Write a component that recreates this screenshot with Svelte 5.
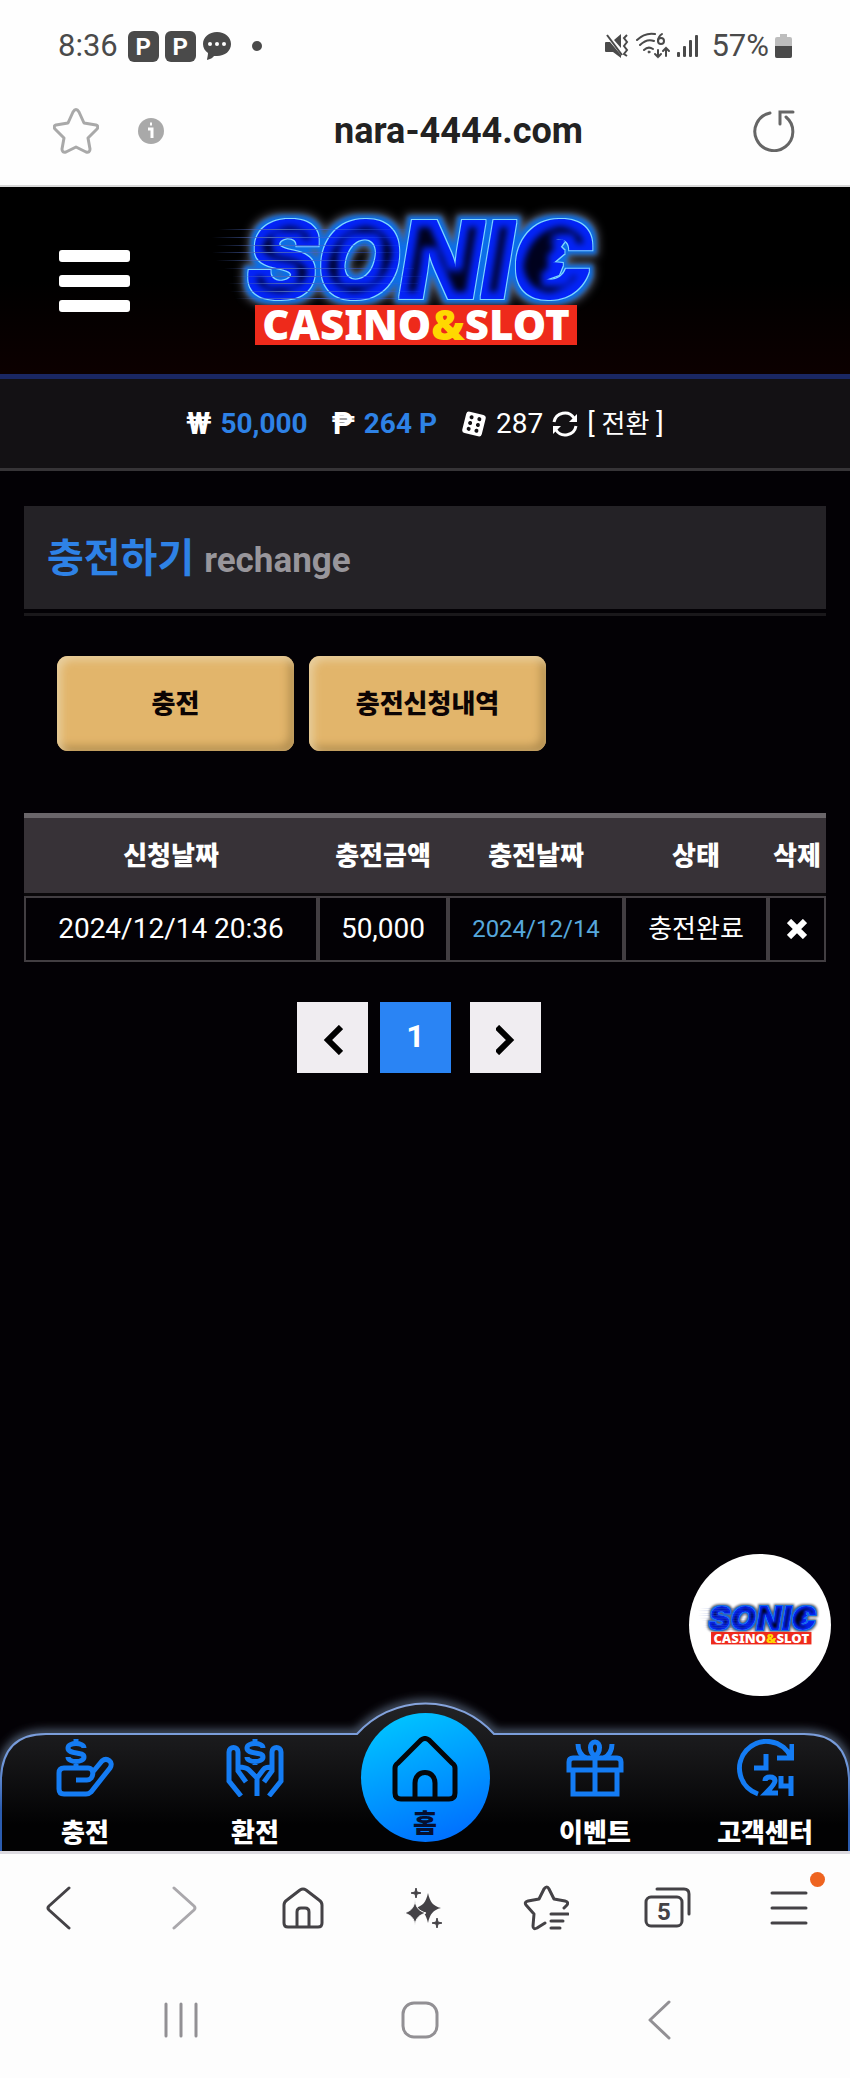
<script lang="ts">
  interface HistoryRow {
    requested: string;
    amount: string;
    charged: string;
    status: string;
  }

  let tab = $state('charge');
  let page = $state(1);
  let rows = $state<HistoryRow[]>([
    { requested: '2024/12/14 20:36', amount: '50,000', charged: '2024/12/14', status: '충전완료' }
  ]);

  const columns = ['신청날짜', '충전금액', '충전날짜', '상태', '삭제'];
  const speedLines = [
    [9, 30], [2, 38], [6, 46], [2, 53], [6, 61], [14, 69], [22, 77], [18, 84], [20, 92], [25, 99]
  ];

  function removeRow(index: number): void {
    rows.splice(index, 1);
  }

  function prevPage(): void {
    if (page > 1) page--;
  }
</script>

{#snippet logo(id: string)}
  <svg class="logo" viewBox="0 10 404 146" role="img" aria-label="SONIC CASINO&SLOT">
    <defs>
      <!-- grey halo, blue glow, bright body, dark core and a thin light edge -->
      <filter id="{id}-neon" x="-20%" y="-40%" width="140%" height="180%" color-interpolation-filters="sRGB">
        <feMorphology in="SourceAlpha" operator="dilate" radius="1" result="shape" />
        <feMorphology in="shape" operator="dilate" radius="6" result="wide" />
        <feGaussianBlur in="wide" stdDeviation="4" result="wideBlur" />
        <feFlood flood-color="#5c606e" />
        <feComposite in2="wideBlur" operator="in" result="halo" />
        <feMorphology in="shape" operator="dilate" radius="4" result="mid" />
        <feGaussianBlur in="mid" stdDeviation="2" result="midBlur" />
        <feFlood flood-color="#0b6ee8" />
        <feComposite in2="midBlur" operator="in" result="glow" />
        <feMorphology in="shape" operator="dilate" radius="1" result="outer" />
        <feFlood flood-color="#7fd6ff" />
        <feComposite in2="outer" operator="in" result="edge" />
        <feFlood flood-color="#0424f8" />
        <feComposite in2="shape" operator="in" result="body" />
        <feMorphology in="shape" operator="erode" radius="7" result="small" />
        <feGaussianBlur in="small" stdDeviation="3" result="smallBlur" />
        <feFlood flood-color="#00021e" />
        <feComposite in2="smallBlur" operator="in" result="core" />
        <feMerge>
          <feMergeNode in="halo" />
          <feMergeNode in="glow" />
          <feMergeNode in="edge" />
          <feMergeNode in="body" />
          <feMergeNode in="core" />
        </feMerge>
      </filter>
      <linearGradient id="{id}-line">
        <stop offset="0" stop-color="#4a66b8" stop-opacity="0" />
        <stop offset="0.3" stop-color="#4a66b8" />
        <stop offset="1" stop-color="#2a5cff" stop-opacity="0.1" />
      </linearGradient>
    </defs>
    <g filter="url(#{id}-neon)">
      <text x="37" y="99" class="word">SONIC</text>
      <path d="M324 44l30-3-5 7 5 5-13 11 11 1-4 10-22 8z" />
    </g>
    {#each speedLines as [x, y]}
      <rect {x} {y} width="190" height="1" fill="url(#{id}-line)" />
    {/each}
    <rect x="45" y="106" width="322" height="40" fill="#ee2a1b" />
    <text x="206" y="141" class="sub">CASINO<tspan class="amp">&amp;</tspan>SLOT</text>
  </svg>
{/snippet}

<div class="screen">
  <header class="phone-top">
    <div class="status">
      <span class="clock">8:36</span>
      <span class="app-badge">P</span>
      <span class="app-badge">P</span>
      <svg class="chat" viewBox="0 0 30 30" width="30" height="30">
        <path d="M15 1C7 1 1 6 1 13c0 4 2 7 5 9 0 3-1 5-1 7 3-1 6-2 7-4h3c8 0 14-5 14-12S23 1 15 1z" fill="#4a4a4a" />
        <circle cx="8" cy="13" r="2" fill="#fff" /><circle cx="15" cy="13" r="2" fill="#fff" /><circle cx="22" cy="13" r="2" fill="#fff" />
      </svg>
      <span class="more-dot"></span>

      <span class="spacer"></span>

      <svg viewBox="0 0 25 26" width="25" height="26" fill="none" stroke="#4a4a4a" stroke-width="2">
        <path d="M1 10q0-1 1-1h4l11 13v3l-8-6H2q-1 0-1-1zM10 7l7-6v14z" fill="#4a4a4a" stroke="none" />
        <path d="M3 2l15 20" />
        <path d="M23 2l-3 3 3 4-3 4 3 4-3 4 3 2" />
      </svg>
      <svg viewBox="0 0 36 28" width="36" height="28" fill="none" stroke="#4a4a4a" stroke-width="2" stroke-linecap="round">
        <path d="M2 8c6-6 12-7 18-6M5 13c5-5 9-6 14-4M9 18c3-3 6-3 9-1" />
        <circle cx="14" cy="20" r="1" fill="#4a4a4a" stroke-width="1" />
        <path d="M27 2c-3 2-4 5-4 7" /><circle cx="26" cy="9" r="3" />
        <path d="M23 18v7M20 22l3 3 3-3M31 24v-8M28 19l3-3 3 3" />
      </svg>
      <svg class="signal" viewBox="0 0 22 24" width="22" height="24" fill="#4a4a4a">
        <rect x="0" y="18" width="3" height="5" rx="1" /><rect x="6" y="12" width="3" height="11" rx="1" />
        <rect x="12" y="6" width="3" height="17" rx="1" /><rect x="18" y="1" width="3" height="22" rx="1" />
      </svg>
      <span class="clock">57%</span>
      <svg class="battery" viewBox="0 0 17 24" width="17" height="24">
        <path d="M5 0h7v3h3a2 2 0 0 1 2 2v17a2 2 0 0 1-2 2H2a2 2 0 0 1-2-2V5a2 2 0 0 1 2-2h3z" fill="#bdbdbd" />
        <path d="M0 12h17v10a2 2 0 0 1-2 2H2a2 2 0 0 1-2-2z" fill="#4a4a4a" />
      </svg>
    </div>

    <div class="address">
      <button class="plain" aria-label="즐겨찾기">
        <svg viewBox="0 0 46 46" width="46" height="46" fill="none" stroke="#a9a9a9" stroke-width="3" stroke-linejoin="round">
          <path d="M20 4q3-5 6 0l5 11 12 2q3 1 1 4l-9 9 2 11q0 4-4 3l-10-5-10 5q-4 1-4-3l2-11-9-9q-2-3 1-4l12-2z" />
        </svg>
      </button>
      <button class="plain info" aria-label="사이트 정보">
        <svg viewBox="0 0 26 26" width="26" height="26">
          <circle cx="13" cy="13" r="13" fill="#a9a9a9" />
          <path d="M10 11h4v9M12 6h2" fill="none" stroke="#fff" stroke-width="3" />
        </svg>
      </button>
      <span class="url">nara-4444.com</span>
      <button class="plain" aria-label="새로고침">
        <svg viewBox="0 0 42 42" width="42" height="42" fill="none" stroke="#666" stroke-width="3" stroke-linecap="round">
          <path d="M17 3A19 19 0 1 0 33 7M27 14V2h13" />
        </svg>
      </button>
    </div>
  </header>

  <div class="site-head">
    <button class="burger" aria-label="메뉴"><span></span><span></span><span></span></button>
    <a class="brand" href="#home">{@render logo('head')}</a>
  </div>

  <div class="balance">
    <span class="pair"><b>₩</b><strong>50,000</strong></span>
    <span class="pair"><b>₱</b><strong>264 P</strong></span>
    <span class="pair">
      <svg viewBox="0 0 26 26" width="26" height="26">
        <g transform="rotate(14 13 13)">
          <rect x="3" y="2" width="20" height="22" rx="3" fill="#fff" />
          <g fill="#131114">
            <circle cx="9" cy="7" r="2" /><circle cx="17" cy="7" r="2" />
            <circle cx="9" cy="13" r="2" /><circle cx="17" cy="13" r="2" />
            <circle cx="9" cy="19" r="2" /><circle cx="17" cy="19" r="2" />
          </g>
        </g>
      </svg>
      <span>287</span>
      <svg viewBox="0 0 26 26" width="26" height="26" fill="none" stroke="#fff" stroke-width="3">
        <path d="M2 11A11 11 0 0 1 22 7M24 15A11 11 0 0 1 4 19" />
        <path d="M25 3v8h-8zM1 23v-8h8z" fill="#fff" stroke="none" />
      </svg>
      <button class="convert">[ <span class="ko">전환</span> ]</button>
    </span>
  </div>

  <main>
    <h1><span>충전하기</span><small>rechange</small></h1>

    <div class="tabs">
      <button class:active={tab === 'charge'} onclick={() => (tab = 'charge')}>충전</button>
      <button class:active={tab === 'history'} onclick={() => (tab = 'history')}>충전신청내역</button>
    </div>

    <table>
      <thead>
        <tr>
          {#each columns as column}
            <th>{column}</th>
          {/each}
        </tr>
      </thead>
      <tbody>
        {#each rows as row, i}
          <tr>
            <td>{row.requested}</td>
            <td>{row.amount}</td>
            <td class="charged">{row.charged}</td>
            <td class="ko">{row.status}</td>
            <td>
              <button class="plain remove" aria-label="삭제" onclick={() => removeRow(i)}>
                <svg viewBox="0 0 20 20" width="20" height="20" stroke="#fff" stroke-width="6">
                  <path d="M2 2l16 16M18 2L2 18" />
                </svg>
              </button>
            </td>
          </tr>
        {/each}
      </tbody>
    </table>

    <nav class="pager" aria-label="페이지">
      <button aria-label="이전" onclick={prevPage}>
        <svg viewBox="0 0 20 30" width="20" height="30" fill="none" stroke="#000" stroke-width="6"><path d="M18 2L5 15l13 13" /></svg>
      </button>
      <button class="current">{page}</button>
      <button class="next" aria-label="다음">
        <svg viewBox="0 0 20 30" width="20" height="30" fill="none" stroke="#000" stroke-width="6"><path d="M1 2l13 13L1 28" /></svg>
      </button>
    </nav>
  </main>

  <div class="dock">
    <a class="float" href="#chat">{@render logo('float')}</a>

    <svg class="dock-bg" viewBox="0 0 850 166" preserveAspectRatio="none" aria-hidden="true">
      <defs>
        <linearGradient id="dock-fill" x1="0" y1="0" x2="0" y2="1">
          <stop offset="0" stop-color="#222326" />
          <stop offset="0.3" stop-color="#18181a" />
          <stop offset="0.8" stop-color="#020203" />
        </linearGradient>
        <linearGradient id="dock-edge" x1="0" y1="0" x2="0" y2="1">
          <stop offset="0" stop-color="#86a4dc" />
          <stop offset="0.4" stop-color="#6f97da" />
          <stop offset="0.7" stop-color="#2b5cb0" />
        </linearGradient>
        <filter id="dock-glow" x="-5%" y="-20%" width="110%" height="140%">
          <feGaussianBlur stdDeviation="5" />
        </filter>
      </defs>
      <path d="M1 170V93Q3 49 46 49H357A92 92 0 0 1 494 49H804Q847 49 849 93V170" fill="none" stroke="#5f7087" stroke-width="7" filter="url(#dock-glow)" />
      <path d="M1 170V93Q3 49 46 49H357A92 92 0 0 1 494 49H804Q847 49 849 93V170" fill="url(#dock-fill)" stroke="url(#dock-edge)" stroke-width="2" />
    </svg>

    <nav class="dock-items">
      <a href="#charge">
        <svg viewBox="0 0 58 58" width="58" height="58" fill="none" stroke="#147cf4" stroke-width="5">
          <path d="M28 9c0-6-16-6-16 0 0 7 16 3 16 9 0 6-16 6-16 0M20 0v5M20 22v6" />
          <path d="M20 41h11c7 0 8-12 1-12H8q-5 0-5 5v16q0 5 5 5h22q3 0 5-2l19-24c4-6-3-11-8-7L36 34" />
        </svg>
        <span>충전</span>
      </a>
      <a href="#exchange">
        <svg viewBox="0 0 58 58" width="58" height="58" fill="none" stroke="#147cf4" stroke-width="5">
          <path d="M37 9c0-6-16-6-16 0 0 7 16 3 16 9 0 6-16 6-16 0M29 0v5M29 21v5" />
          <path d="M15 57L3 42V13c0-6 9-6 9 0v19l8 11M12 28c4 0 8 0 11 3l8 8v18M31 39l6-8c2-3 5-3 9-3M43 57l12-15V13c0-6-9-6-9 0v19l-8 11" />
        </svg>
        <span>환전</span>
      </a>
      <a class="home" href="#home">
        <svg viewBox="0 0 66 66" width="66" height="66" fill="none" stroke="#04060a" stroke-width="5" stroke-linejoin="round">
          <path d="M23 63V47c0-14 20-14 20 0v16M9 63h48q6 0 6-6V32q0-3-3-5L37 4q-4-3-8 0L6 27q-3 2-3 5v25q0 6 6 6z" />
        </svg>
        <span>홈</span>
      </a>
      <a href="#event">
        <svg viewBox="0 0 58 58" width="58" height="58" fill="none" stroke="#147cf4" stroke-width="5">
          <path d="M3 31V23q0-4 4-4h44q4 0 4 4v8zM7 32v23h44V32M29 19v37" />
          <path d="M29 17c-6-4-6-14 0-14s6 10 0 14zM12 5q0 10 8 14M46 5q0 10-8 14" />
        </svg>
        <span>이벤트</span>
      </a>
      <a href="#support">
        <svg viewBox="0 0 58 58" width="58" height="58" fill="none" stroke="#147cf4" stroke-width="5">
          <path d="M22 55A27 27 0 1 1 55 18M56 5v14H41M30 15v14H18" />
          <path d="M29 42q0-4 5-4 5 0 5 4 0 3-9 12h12M45 37v10h9M55 37v20" />
        </svg>
        <span>고객센터</span>
      </a>
    </nav>
  </div>

  <footer>
    <nav class="browser-bar">
      <button class="plain" aria-label="뒤로">
        <svg viewBox="0 0 44 44" width="44" height="44" class="stroke"><path d="M30 2L10 20q-2 2 0 4l20 18" /></svg>
      </button>
      <button class="plain" aria-label="앞으로" disabled>
        <svg viewBox="0 0 44 44" width="44" height="44" class="stroke faded"><path d="M14 2l20 18q2 2 0 4L14 42" /></svg>
      </button>
      <button class="plain" aria-label="홈">
        <svg viewBox="0 0 44 44" width="44" height="44" class="stroke"><path d="M15 40V26q0-4 4-4h4q4 0 4 4v14M6 41h30q4 0 4-4V19q0-3-3-5L24 4q-3-2-6 0L5 14q-3 2-3 5v18q0 4 4 4z" /></svg>
      </button>
      <button class="plain" aria-label="AI">
        <svg viewBox="0 0 44 44" width="44" height="44" fill="#444246">
          <path d="M25 7c2 9 5 13 13 15-8 2-11 6-13 15-2-9-5-13-13-15 8-2 11-6 13-15z" />
          <path d="M12 14c1 8 4 11 11 13-7 2-10 5-11 12-1-7-4-10-11-12 7-2 10-5 11-13z" stroke="#fdfdfd" stroke-width="1" />
          <path d="M13 2l1 4 4 1-4 1-1 4-1-4-4-1 4-1zM34 32l1 4 4 1-4 1-1 4-1-4-4-1 4-1z" stroke="#444246" />
        </svg>
      </button>
      <button class="plain" aria-label="북마크">
        <svg viewBox="0 0 46 46" width="46" height="46" class="stroke">
          <path d="M41 23l3-3q2-3-2-4l-11-2-5-10q-2-4-5 0l-5 10-11 2q-4 1-2 4l8 9-1 12q0 4 4 2l8-5M28 29h17M28 36h12M28 43h9" />
        </svg>
      </button>
      <button class="plain tab-count" aria-label="탭 5">
        <svg viewBox="0 0 48 44" width="48" height="44" class="stroke">
          <rect x="2" y="11" width="36" height="29" rx="5" />
          <path d="M13 3h27q5 0 5 5v20" />
        </svg>
        <span>5</span>
      </button>
      <button class="plain tools" aria-label="도구">
        <svg viewBox="0 0 38 36" width="38" height="36" class="stroke"><path d="M2 3h34M2 18h34M2 33h34" /></svg>
        <span class="notice"></span>
      </button>
    </nav>
    <nav class="system-bar">
      <button class="plain" aria-label="최근 앱">
        <svg viewBox="0 0 36 38" width="36" height="38" class="stroke grey"><path d="M3 3v32M18 3v32M33 3v32" /></svg>
      </button>
      <button class="plain" aria-label="홈 화면">
        <svg viewBox="0 0 38 38" width="38" height="38" class="stroke grey"><rect x="2" y="2" width="34" height="34" rx="11" /></svg>
      </button>
      <button class="plain" aria-label="이전 화면">
        <svg viewBox="0 0 24 40" width="24" height="40" class="stroke grey"><path d="M22 2L3 20l19 18" /></svg>
      </button>
    </nav>
  </footer>
</div>

<style>
  :global(body) {
    margin: 0;
    background: #000;
  }

  .screen {
    min-height: 100vh;
    display: flex;
    flex-direction: column;
    background: #030105;
    color: #fff;
    font-family: Roboto, "Noto Sans CJK KR", sans-serif;
    font-size: 28px;
    line-height: 36px;
  }

  svg {
    display: block;
    flex: none;
  }

  button {
    margin: 0;
    padding: 0;
    border: 0;
    font: inherit;
    color: inherit;
    cursor: pointer;
  }

  a {
    color: inherit;
    text-decoration: none;
  }

  .plain {
    display: flex;
    background: none;
  }

  .ko {
    font-size: 26px;
  }

  .phone-top {
    background: #fefefe;
    border-bottom: 2px solid #d8d8d8;
    color: #4a4a4a;
  }

  .status {
    display: flex;
    align-items: center;
    gap: 6px;
    height: 92px;
    padding: 0 58px;
  }

  .clock {
    font-size: 31px;
  }

  .app-badge {
    width: 31px;
    height: 31px;
    border-radius: 6px;
    background: #4a4a4a;
    color: #fff;
    font-size: 24px;
    font-weight: 700;
    line-height: 32px;
    text-align: center;
  }

  .clock + .app-badge {
    margin-left: 4px;
  }

  .more-dot {
    width: 10px;
    height: 10px;
    margin-left: 14px;
    border-radius: 50%;
    background: #4a4a4a;
  }

  .spacer {
    flex: 1;
  }

  .signal {
    margin-right: 6px;
  }

  .address {
    display: flex;
    align-items: center;
    height: 77px;
    padding: 0 55px 16px 53px;
  }

  .info {
    margin-left: 39px;
  }

  .url {
    flex: 1;
    color: #222;
    font-size: 36px;
    font-weight: 700;
    text-align: center;
  }

  .site-head {
    display: flex;
    align-items: center;
    gap: 80px;
    height: 187px;
    padding-left: 59px;
    background: linear-gradient(#000, #000 50%, #0c0000);
    border-bottom: 5px solid #1a2763;
  }

  .burger {
    display: flex;
    flex-direction: column;
    gap: 13px;
    background: none;
  }

  .burger span {
    width: 71px;
    height: 12px;
    border-radius: 3px;
    background: #fff;
  }

  .brand {
    width: 404px;
    padding-top: 3px;
  }

  .logo {
    width: 100%;
    overflow: visible;
  }

  .word {
    font-family: Inter, sans-serif;
    font-size: 106px;
    font-weight: 900;
    font-style: italic;
  }

  .sub {
    fill: #fff;
    font-family: "Noto Sans", sans-serif;
    font-size: 42px;
    font-weight: 900;
    text-anchor: middle;
  }

  .amp {
    fill: #ffd800;
  }

  .balance {
    display: flex;
    align-items: center;
    justify-content: center;
    gap: 24px;
    padding: 27px 0 26px;
    background: #131114;
    border-bottom: 3px solid #363437;
  }

  .pair {
    display: flex;
    align-items: center;
    gap: 9px;
  }

  .pair b {
    font-size: 31px;
    font-weight: 700;
  }

  .pair strong {
    color: #2e82e6;
    font-weight: 700;
  }

  .convert {
    background: none;
  }

  main {
    flex: 1;
    padding: 35px 24px 0;
  }

  h1 {
    display: flex;
    align-items: baseline;
    gap: 10px;
    margin: 0;
    padding: 27px 23px 22px;
    background: #242226;
    font-size: 40px;
    line-height: 52px;
    color: #2e82e6;
    position: relative;
  }

  h1::after {
    content: "";
    position: absolute;
    inset: auto 0 -7px;
    border-bottom: 3px solid #1a181b;
  }

  h1 small {
    color: #98969b;
    font-size: 35px;
    font-weight: 700;
  }

  .tabs {
    display: flex;
    gap: 15px;
    padding: 47px 33px 62px;
  }

  .tabs button {
    width: 237px;
    height: 95px;
    border-radius: 11px;
    background: #e2b56b;
    box-shadow: inset 4px 4px 8px #e8cf9f, inset -5px -5px 8px #b48f50;
    color: #0c0404;
    font-size: 26px;
    font-weight: 900;
  }

  table {
    width: 100%;
    table-layout: fixed;
    border-collapse: separate;
    border-spacing: 0;
    text-align: center;
  }

  th {
    padding: 20px 0 19px;
    background: #373237;
    border-top: 5px solid #6a666a;
    border-bottom: 3px solid #0a080a;
    font-size: 26px;
    font-weight: 900;
    white-space: nowrap;
  }

  th:nth-child(1) {
    width: 294px;
  }

  th:nth-child(2) {
    width: 130px;
  }

  th:nth-child(3) {
    width: 176px;
  }

  th:nth-child(4) {
    width: 144px;
  }

  td {
    padding: 13px 0;
    border: 2px solid #423e42;
  }

  td.charged {
    color: #56a8dc;
    font-size: 24px;
  }

  .remove {
    margin: 0 auto;
  }

  .pager {
    display: flex;
    justify-content: center;
    gap: 12px;
    padding: 40px 12px 0 0;
  }

  .pager button {
    display: flex;
    align-items: center;
    justify-content: center;
    width: 71px;
    height: 71px;
    background: #f0edf1;
    color: #000;
  }

  .pager svg {
    margin-top: 4px;
  }

  .pager button.current {
    box-sizing: border-box;
    padding-bottom: 3px;
    background: #2a84f4;
    color: #fff;
    font-size: 32px;
    font-weight: 700;
  }

  .pager .next {
    margin-left: 7px;
  }

  .dock {
    position: relative;
    border-bottom: 3px solid #dcdae0;
  }

  .float {
    position: absolute;
    right: 19px;
    bottom: 155px;
    display: flex;
    align-items: center;
    width: 126px;
    height: 142px;
    padding: 0 8px;
    border-radius: 50%;
    background: #fff;
  }

  .dock-bg {
    position: absolute;
    inset: auto 0 0;
    width: 100%;
    height: 166px;
  }

  .dock-items {
    position: relative;
    display: grid;
    grid-template-columns: repeat(5, 1fr);
    align-items: end;
  }

  .dock-items a {
    display: flex;
    flex-direction: column;
    align-items: center;
    gap: 18px;
    font-size: 26px;
    font-weight: 900;
  }

  .dock-items .home {
    justify-self: center;
    box-sizing: border-box;
    width: 129px;
    height: 129px;
    margin-bottom: 9px;
    padding-top: 23px;
    gap: 4px;
    border-radius: 50%;
    background: linear-gradient(160deg, #00ccff, #0070ff 90%);
    color: #061030;
  }

  footer {
    background: #fdfdfd;
  }

  .stroke {
    fill: none;
    stroke: #444246;
    stroke-width: 3px;
    stroke-linecap: round;
    stroke-linejoin: round;
  }

  .faded {
    stroke: #aaa8ac;
  }

  .grey {
    stroke: #929094;
  }

  .browser-bar {
    display: grid;
    grid-template-columns: repeat(7, 1fr);
    justify-items: center;
    align-items: center;
    height: 108px;
  }

  .tab-count,
  .tools {
    position: relative;
  }

  .tab-count span {
    position: absolute;
    inset: 8px 8px auto 0;
    color: #444246;
    font-size: 24px;
    font-weight: 700;
    text-align: center;
  }

  .notice {
    position: absolute;
    top: -18px;
    right: -17px;
    width: 15px;
    height: 15px;
    border-radius: 50%;
    background: #ee6420;
  }

  .system-bar {
    display: grid;
    grid-template-columns: repeat(3, 1fr);
    justify-items: center;
    align-items: center;
    height: 116px;
    padding: 0 72px 0 62px;
  }
</style>
